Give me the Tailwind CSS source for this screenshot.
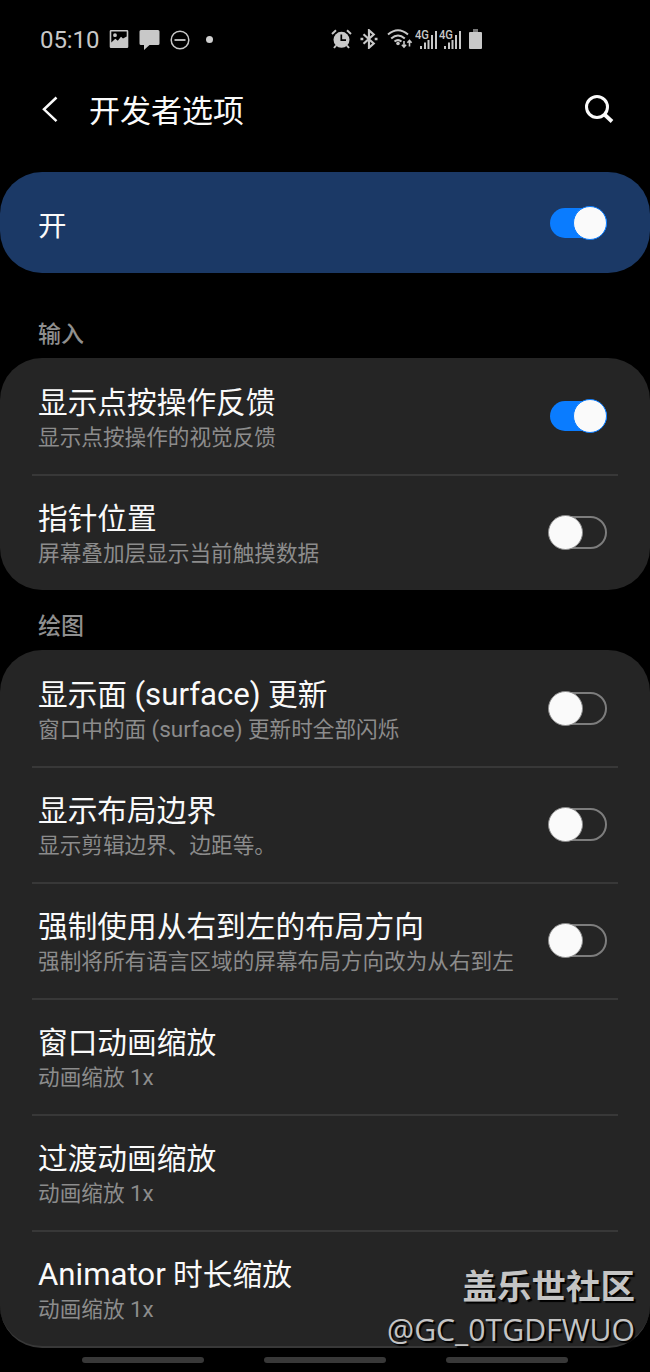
<!DOCTYPE html>
<html lang='zh-CN'>

<head>
    <meta charset='UTF-8'>
    <meta name='viewport' content='width=device-width, initial-scale=1.0'>
    <title>开发者选项</title>
    <script src="https://cdn.jsdelivr.net/npm/@tailwindcss/browser@4"></script>
</head>

<body class="bg-black font-['Roboto','Noto_Sans_CJK_SC',sans-serif] text-[#fafafa]">
    <div class='relative w-[650px] h-[1372px] overflow-hidden flex flex-col'>

        <!-- status bar -->
        <div class='h-[78px] shrink-0 flex items-center pl-10 text-[#c8c8c8]'>
            <span class='w-[60px] text-[24px] leading-6 tracking-[-0.1px] mt-0.5'>05:10</span>
            <svg class='ml-[9px]' width='20' height='20' viewBox='0 0 20 20' fill='currentColor'>
                <path fill-rule='evenodd'
                    d='M2 1h16a1.3 1.3 0 0 1 1.3 1.3v15.4A1.3 1.3 0 0 1 18 19H2a1.3 1.3 0 0 1-1.3-1.3V2.300A1.3 1.3 0 0 1 2 1zM2.300 2.500v11l4-3.700 2.500 2 3.200-4 2 1.600 3.700-2V2.500zM6 4.300a1.900 1.900 0 1 1 0 3.800 1.900 1.900 0 0 1 0-3.800z' />
            </svg>
            <svg class='ml-[10px] mt-0.5' width='21' height='22' viewBox='0 0 21 22' fill='currentColor'>
                <path d='M2 1h17a1.500 1.500 0 0 1 1.500 1.500v12A1.500 1.500 0 0 1 19 16h-8.500l-5.500 5v-5H2a1.500 1.500 0 0 1-1.500-1.500v-12A1.500 1.500 0 0 1 2 1z' />
            </svg>
            <svg class='ml-[10px] mt-0.5' width='20' height='20' viewBox='0 0 20 20' fill='none' stroke='currentColor'>
                <circle cx='10' cy='10' r='8.800' stroke-width='1.500' />
                <path d='M4.500 10h11' stroke-width='1.800' />
            </svg>
            <span class='ml-[16px] size-[7px] rounded-full bg-[#d0d0d0]'></span>

            <svg class='ml-[118px]' width='21' height='20' viewBox='0 0 21 20' fill='none' stroke='currentColor'>
                <circle cx='10.500' cy='10.800' r='8' fill='currentColor' stroke='none' />
                <path d='M1 5l4-3.700M20 5l-4-3.700M5 16.500l-2 2.500M16 16.500l2 2.500' stroke-width='2' />
                <path d='M10.300 5.500v5.700h4.700' stroke='#000' stroke-width='1.700' />
            </svg>
            <svg class='ml-[8px]' width='18' height='20' viewBox='0 0 18 20' fill='none' stroke='currentColor'
                stroke-width='2.200'>
                <path d='M3.500 5.300l10.200 9.200-4.700 4.200V1.300l4.700 4.200L3.500 14.700' />
                <path d='M.5 10h2.800M14.700 10h2.800' stroke-width='2.600' />
            </svg>
            <svg class='ml-[9px]' width='26' height='20' viewBox='0 0 26 20' fill='none' stroke='currentColor'>
                <path d='M1 5.500q10-8.500 20 0M4.200 9.500q6.800-6 13.600 0M7.500 12.600q3.500-3 7 0' stroke-width='2' />
                <circle cx='11' cy='14.500' r='1.800' fill='currentColor' stroke='none' />
                <path d='M17 12v6M14.900 15.800l2.100 2.300 2.100-2.300M22.500 17.500v-6M20.400 13.700l2.100-2.300 2.100 2.300' stroke-width='1.600' />
            </svg>
            <svg class='ml-[2px]' width='23' height='20' viewBox='0 0 23 20' fill='currentColor'>
                <text x='0' y='9.500' font-size='12' font-weight='500' textLength='14' lengthAdjust='spacingAndGlyphs'>4G</text>
                <path d='M5 17h2v3H5zM9 13.500h2V20H9zM12.500 11h2v9h-2zM16 6h2v14h-2zM20 2h2v18h-2z' />
            </svg>
            <svg class='ml-[1px]' width='23' height='20' viewBox='0 0 23 20' fill='currentColor'>
                <text x='0' y='9.500' font-size='12' font-weight='500' textLength='14' lengthAdjust='spacingAndGlyphs'>4G</text>
                <path d='M5 17h2v3H5zM9 13.500h2V20H9zM12.500 11h2v9h-2zM16 6h2v14h-2zM20 2h2v18h-2z' />
            </svg>
            <svg class='ml-[7px]' width='13' height='20' viewBox='0 0 13 20' fill='currentColor'>
                <path d='M4 0h5v3H4z' fill='#777' />
                <path d='M1 3h11a1 1 0 0 1 1 1v15a1 1 0 0 1-1 1H1a1 1 0 0 1-1-1V4a1 1 0 0 1 1-1z' />
            </svg>
        </div>

        <!-- title bar -->
        <div class='h-[94px] shrink-0 flex items-start pl-[42px] pr-[36px]'>
            <svg class='mt-[18px]' width='16' height='26' viewBox='0 0 16 26' fill='none' stroke='currentColor'
                stroke-width='2.500'>
                <path d='M14.500 1.500L2 13.300l12.500 11.800' />
            </svg>
            <h1 class='ml-[31px] mt-[14px] text-[31px] leading-10'>开发者选项</h1>
            <svg class='ml-auto mt-[16px]' width='30' height='30' viewBox='0 0 30 30' fill='none' stroke='currentColor'>
                <circle cx='13' cy='13' r='10.500' stroke-width='3' />
                <path d='M20.500 20.500l7.500 7' stroke-width='3.800' />
            </svg>
        </div>

        <!-- master switch -->
        <div class='h-[101px] shrink-0 flex items-center justify-between rounded-[42px] bg-[#1b3966] pl-[38px] pr-[43px]'>
            <span class='text-[28.500px] leading-9 mt-2'>开</span>
            <div class='relative w-[57px] h-[30px] rounded-full bg-[#0a7cff]'>
                <span class='absolute right-0 -top-[2px] size-[34px] rounded-full bg-[#fafafa] border border-[#0a7cff]'></span>
            </div>
        </div>

        <h2 class='h-[85px] shrink-0 pl-[38px] pt-[48px] text-[23px] leading-7 font-medium text-[#8f8f8f]'>输入</h2>

        <div class='h-[232px] shrink-0 rounded-[42px] bg-[#252525] text-[29.700px]'>
            <div class='h-[116px] flex justify-between pl-[38px] pr-[43px]'>
                <div class='pt-[27px]'>
                    <h3 class='leading-[35px]'>显示点按操作反馈</h3>
                    <p class='text-[21.640px] leading-[35px] text-[#8c8c8c]'>显示点按操作的视觉反馈</p>
                </div>
                <div class='relative mt-[43px] w-[57px] h-[30px] rounded-full bg-[#0a7cff]'>
                    <span class='absolute right-0 -top-[2px] size-[34px] rounded-full bg-[#fafafa] border border-[#0a7cff]'></span>
                </div>
            </div>
            <div class='mx-8 -mb-0.5 h-0.5 bg-[#383838]'></div>
            <div class='h-[116px] flex justify-between pl-[38px] pr-[43px]'>
                <div class='pt-[27px]'>
                    <h3 class='leading-[35px]'>指针位置</h3>
                    <p class='text-[21.640px] leading-[35px] text-[#8c8c8c]'>屏幕叠加层显示当前触摸数据</p>
                </div>
                <div class='relative mt-[42px] w-[58px] h-[33px] rounded-full border-2 border-[#7d7d7d]'>
                    <span class='absolute -left-[3px] -top-[3px] size-[35px] rounded-full bg-[#fafafa] border border-[#8a8a8a]'></span>
                </div>
            </div>
        </div>

        <h2 class='h-[60px] shrink-0 pl-[38px] pt-[23px] text-[23px] leading-7 font-medium text-[#8f8f8f]'>绘图</h2>

        <div class='h-[698px] shrink-0 rounded-[42px] bg-[#252525] border-b-2 border-[#383838] text-[29.700px]'>
            <div class='h-[116px] flex justify-between pl-[38px] pr-[43px]'>
                <div class='pt-[27px]'>
                    <h3 class='h-[35px] leading-[35px]'>显示面 <span class='text-[31.200px]'>(surface)</span> 更新</h3>
                    <p class='h-[35px] text-[21.640px] leading-[35px] text-[#8c8c8c]'>窗口中的面 <span class='text-[22.500px]'>(surface)</span> 更新时全部闪烁</p>
                </div>
                <div class='relative mt-[42px] w-[58px] h-[33px] rounded-full border-2 border-[#7d7d7d]'>
                    <span class='absolute -left-[3px] -top-[3px] size-[35px] rounded-full bg-[#fafafa] border border-[#8a8a8a]'></span>
                </div>
            </div>
            <div class='mx-8 -mb-0.5 h-0.5 bg-[#383838]'></div>
            <div class='h-[116px] flex justify-between pl-[38px] pr-[43px]'>
                <div class='pt-[27px]'>
                    <h3 class='leading-[35px]'>显示布局边界</h3>
                    <p class='text-[21.640px] leading-[35px] text-[#8c8c8c]'>显示剪辑边界、边距等。</p>
                </div>
                <div class='relative mt-[42px] w-[58px] h-[33px] rounded-full border-2 border-[#7d7d7d]'>
                    <span class='absolute -left-[3px] -top-[3px] size-[35px] rounded-full bg-[#fafafa] border border-[#8a8a8a]'></span>
                </div>
            </div>
            <div class='mx-8 -mb-0.5 h-0.5 bg-[#383838]'></div>
            <div class='h-[116px] flex justify-between pl-[38px] pr-[43px]'>
                <div class='pt-[27px]'>
                    <h3 class='leading-[35px]'>强制使用从右到左的布局方向</h3>
                    <p class='text-[21.640px] leading-[35px] text-[#8c8c8c]'>强制将所有语言区域的屏幕布局方向改为从右到左</p>
                </div>
                <div class='relative mt-[42px] w-[58px] h-[33px] rounded-full border-2 border-[#7d7d7d]'>
                    <span class='absolute -left-[3px] -top-[3px] size-[35px] rounded-full bg-[#fafafa] border border-[#8a8a8a]'></span>
                </div>
            </div>
            <div class='mx-8 -mb-0.5 h-0.5 bg-[#383838]'></div>
            <div class='h-[116px] pl-[38px] pt-[27px]'>
                <h3 class='leading-[35px]'>窗口动画缩放</h3>
                <p class='h-[35px] text-[21.640px] leading-[35px] text-[#8c8c8c]'>动画缩放 <span class='text-[22.500px]'>1x</span></p>
            </div>
            <div class='mx-8 -mb-0.5 h-0.5 bg-[#383838]'></div>
            <div class='h-[116px] pl-[38px] pt-[27px]'>
                <h3 class='leading-[35px]'>过渡动画缩放</h3>
                <p class='h-[35px] text-[21.640px] leading-[35px] text-[#8c8c8c]'>动画缩放 <span class='text-[22.500px]'>1x</span></p>
            </div>
            <div class='mx-8 -mb-0.5 h-0.5 bg-[#383838]'></div>
            <div class='h-[116px] pl-[38px] pt-[27px]'>
                <h3 class='h-[35px] leading-[35px]'><span class='text-[31.200px]'>Animator</span> 时长缩放</h3>
                <p class='h-[35px] text-[21.640px] leading-[35px] text-[#8c8c8c]'>动画缩放 <span class='text-[22.500px]'>1x</span></p>
            </div>
        </div>

        <!-- gesture hints -->
        <div class='flex gap-[60px] pl-[82px] pt-[9px]'>
            <span class='w-[122px] h-[6px] rounded-full bg-[#383838]'></span>
            <span class='w-[122px] h-[6px] rounded-full bg-[#383838]'></span>
            <span class='w-[122px] h-[6px] rounded-full bg-[#383838]'></span>
        </div>

        <!-- watermark -->
        <div
            class='absolute right-[15px] bottom-[20px] text-right text-[#c4c4c4] [text-shadow:2px_2px_1px_#000]'>
            <p class="font-['Noto_Sans_CJK_SC',sans-serif] font-bold text-[34.500px] leading-[44px] -mt-0.5 mb-0.5">盖乐世社区</p>
            <p class="font-['Open_Sans',sans-serif] text-[30.200px] leading-[44px]">@GC_0TGDFWUO</p>
        </div>
    </div>
</body>

</html>
